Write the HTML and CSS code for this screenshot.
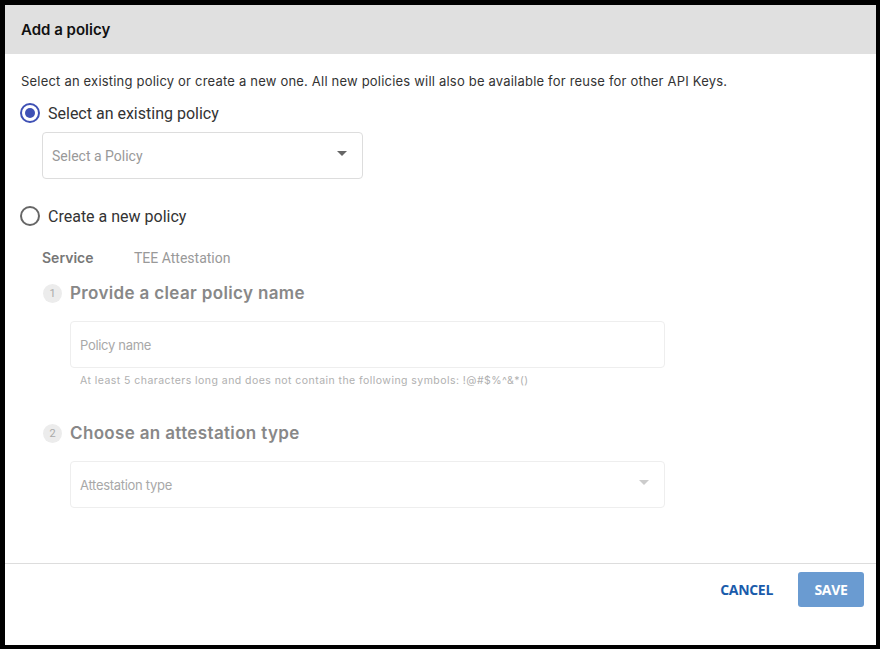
FILE: index.html
```html
<!DOCTYPE html>
<html>
<head>
<meta charset="utf-8">
<link rel="stylesheet" href="styles.css">
</head>
<body>
<div class="dialog">
  <div class="header">Add a policy</div>
  <div class="content">
    <p class="intro">Select an existing policy or create a new one. All new policies will also be available for reuse for other API Keys.</p>
    <label class="radio-row">
      <span class="radio checked"><span class="dot"></span></span>
      <span class="radio-label">Select an existing policy</span>
    </label>
    <div class="select existing">
      <span class="placeholder">Select a Policy</span>
      <span class="caret"></span>
    </div>
    <label class="radio-row second">
      <span class="radio"></span>
      <span class="radio-label">Create a new policy</span>
    </label>
    <div class="new-policy">
      <div class="service-row">
        <span class="service-key">Service</span>
        <span class="service-val">TEE Attestation</span>
      </div>
      <div class="step">
        <span class="step-num">1</span>
        <span class="step-title">Provide a clear policy name</span>
      </div>
      <div class="field input">
        <span class="placeholder light">Policy name</span>
      </div>
      <div class="hint">At least 5 characters long and does not contain the following symbols: !@#$%^&amp;*()</div>
      <div class="step step2">
        <span class="step-num">2</span>
        <span class="step-title">Choose an attestation type</span>
      </div>
      <div class="field input">
        <span class="placeholder light">Attestation type</span>
        <span class="caret faint"></span>
      </div>
    </div>
  </div>
  <div class="footer">
    <button class="btn cancel">CANCEL</button>
    <button class="btn save">SAVE</button>
  </div>
</div>
</body>
</html>
```

FILE: styles.css
```css
html, body {
  margin: 0;
  padding: 0;
  background: #000;
}
body {
  padding: 5px 4px 4px 5px;
  height: 649px;
  box-sizing: border-box;
}
.dialog {
  width: 871px;
  height: 640px;
  background: #fff;
  display: flex;
  flex-direction: column;
  font-family: Inter, "Liberation Sans", sans-serif;
}
.header {
  height: 49px;
  background: #e0e0e0;
  display: flex;
  align-items: center;
  padding-left: 16px;
  font-size: 15px;
  font-weight: 600;
  color: #111;
  letter-spacing: 0;
}
.content {
  flex: 1;
  padding: 0 16px;
}
.intro {
  margin: 18px 0 0;
  font-size: 13px;
  color: #333;
  letter-spacing: 0.2px;
  line-height: 18px;
}
.radio-row {
  display: flex;
  align-items: center;
  margin-top: 11px;
  height: 24px;
}
.radio-row.second {
  margin-top: 25px;
}
.radio {
  width: 20px;
  height: 20px;
  box-sizing: border-box;
  border: 2px solid #666;
  border-radius: 50%;
  display: flex;
  align-items: center;
  justify-content: center;
  margin-left: -1px;
}
.radio.checked {
  border-color: #3f51b5;
}
.dot {
  width: 10px;
  height: 10px;
  border-radius: 50%;
  background: #3f51b5;
}
.radio-label {
  margin-left: 8px;
  font-family: Roboto, "Liberation Sans", sans-serif;
  font-size: 16px;
  color: #333;
}
.select {
  position: relative;
  box-sizing: border-box;
  border: 1px solid #ddd;
  border-radius: 4px;
  display: flex;
  align-items: center;
  padding: 0 10px 0 9px;
}
.existing {
  width: 321px;
  height: 47px;
  margin: 7px 0 0 21px;
}
.placeholder {
  font-family: Roboto, "Liberation Sans", sans-serif;
  font-size: 14px;
  color: #999;
}
.placeholder.light {
  font-family: Inter, "Liberation Sans", sans-serif;
  font-size: 13px;
  color: #a8a8a8;
  letter-spacing: -0.3px;
}
.caret {
  margin-left: auto;
  width: 0;
  height: 0;
  border-left: 5px solid transparent;
  border-right: 5px solid transparent;
  border-top: 5px solid #666;
  margin-right: 5px;
  margin-top: -4px;
}
.caret.faint {
  border-top-color: #ccc;
}
.new-policy {
  padding-left: 21px;
}
.service-row {
  margin-top: 21px;
  display: flex;
  align-items: baseline;
  height: 20px;
}
.service-key {
  font-size: 14px;
  font-weight: 600;
  color: #777;
  width: 92px;
  letter-spacing: 0;
}
.service-val {
  font-family: Roboto, "Liberation Sans", sans-serif;
  font-size: 14px;
  color: #999;
}
.step {
  display: flex;
  align-items: center;
  margin-top: 13px;
  height: 22px;
}
.step2 {
  margin-top: 35px;
}
.step-num {
  width: 19px;
  height: 19px;
  border-radius: 50%;
  background: #ececec;
  color: #aaa;
  font-family: Roboto, "Liberation Sans", sans-serif;
  font-size: 11px;
  display: flex;
  align-items: center;
  justify-content: center;
  margin-left: 1px;
}
.step-title {
  margin-left: 8px;
  font-size: 17px;
  font-weight: 600;
  color: #888;
  letter-spacing: 0.35px;
}
.field {
  box-sizing: border-box;
  width: 595px;
  height: 47px;
  margin: 17px 0 0 28px;
  border: 1px solid #eee;
  border-radius: 4px;
  display: flex;
  align-items: center;
  padding: 0 10px 0 9px;
}
.hint {
  margin: 6px 0 0 38px;
  font-size: 10.5px;
  color: #b0b0b0;
  letter-spacing: 0.45px;
}
.footer {
  height: 82px;
  border-top: 1px solid #ddd;
  display: flex;
  align-items: flex-start;
  justify-content: flex-end;
  padding: 8px 12px 0 0;
  box-sizing: border-box;
}
.btn {
  border: none;
  font-family: "Open Sans", "Liberation Sans", sans-serif;
  font-size: 14px;
  font-weight: 700;
  letter-spacing: -0.3px;
  cursor: pointer;
}
.cancel {
  background: none;
  color: #1a5bab;
  height: 35px;
  margin-right: 13px;
  padding: 0 12px;
}
.save {
  background: #6a9bd1;
  color: #fff;
  width: 66px;
  height: 35px;
  border-radius: 3px;
}
```
